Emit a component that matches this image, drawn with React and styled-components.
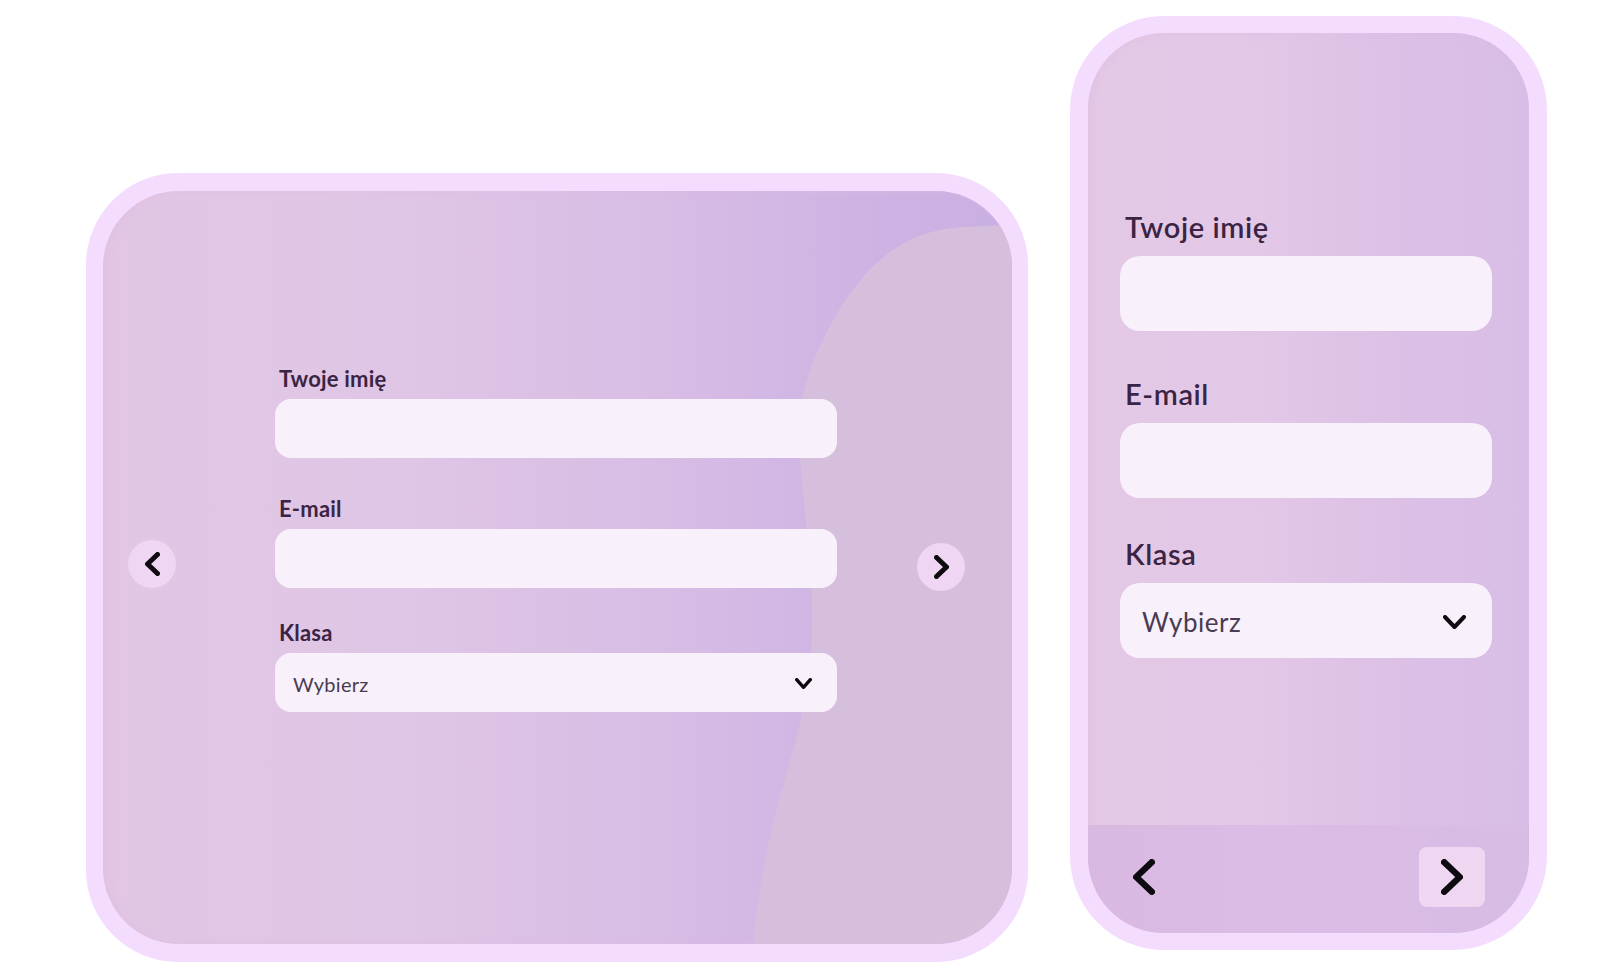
import React from "react";
import styled, { createGlobalStyle, css } from "styled-components";

const GlobalStyle = createGlobalStyle`
    html, body {
        margin: 0;
        padding: 0;
        background: #ffffff;
    }

    body {
        font-family: Lato, "Open Sans", sans-serif;
        color: #3b2443;
    }

    * {
        box-sizing: border-box;
    }
`;

// chevron whose stroke fills exactly width x height
function Chevron({ dir = "right", width, height, stroke }) {
    const s = stroke / 2;
    const w = width;
    const h = height;
    const points = {
        left: `${w - s},${s} ${s},${h / 2} ${w - s},${h - s}`,
        right: `${s},${s} ${w - s},${h / 2} ${s},${h - s}`,
        down: `${s},${s} ${w / 2},${h - s} ${w - s},${s}`,
    }[dir];
    return (
        <svg width={w} height={h} viewBox={`0 0 ${w} ${h}`} fill="none">
            <polyline
                points={points}
                stroke="#0d0a10"
                strokeWidth={stroke}
                strokeLinecap="round"
                strokeLinejoin="round"
            />
        </svg>
    );
}

function Field({ label, select, $mobile, $space }) {
    return (
        <FieldWrap $space={$space}>
            <Label $mobile={$mobile}>{label}</Label>
            {select ? (
                <SelectBox $mobile={$mobile}>
                    <span>Wybierz</span>
                    {$mobile ? (
                        <Chevron dir="down" width={23} height={14} stroke={4} />
                    ) : (
                        <Chevron dir="down" width={17} height={11} stroke={3.4} />
                    )}
                </SelectBox>
            ) : (
                <TextBox $mobile={$mobile} />
            )}
        </FieldWrap>
    );
}

export default function App() {
    return (
        <>
            <GlobalStyle />
            <Page>
                <DesktopFrame>
                    <DesktopScreen>
                        <Blob viewBox="0 0 909 753" preserveAspectRatio="none">
                            <path
                                d="M909,34 L862,36 C822,38 790,52 760,86 C730,122 705,172 698,214 C690,270 712,360 709,440 C706,520 686,570 673,620 C661,670 654,710 650,753 L909,753 Z"
                                fill="#d6bfdd"
                            />
                        </Blob>
                        <RoundNav aria-label="Wstecz">
                            <Chevron dir="left" width={15} height={24} stroke={5} />
                        </RoundNav>
                        <DesktopForm>
                            <Field label="Twoje imię" />
                            <Field label="E-mail" $space="39px" />
                            <Field label="Klasa" select $space="33px" />
                        </DesktopForm>
                        <RoundNav aria-label="Dalej" $offset="-2px">
                            <Chevron dir="right" width={15} height={24} stroke={5} />
                        </RoundNav>
                    </DesktopScreen>
                </DesktopFrame>

                <PhoneFrame>
                    <PhoneScreen>
                        <PhoneForm>
                            <Field label="Twoje imię" $mobile />
                            <Field label="E-mail" $mobile $space="46px" />
                            <Field label="Klasa" select $mobile $space="39px" />
                        </PhoneForm>
                        <PhoneFooter>
                            <SquareNav aria-label="Wstecz">
                                <Chevron dir="left" width={22} height={36} stroke={6.5} />
                            </SquareNav>
                            <SquareNav aria-label="Dalej" $filled>
                                <Chevron dir="right" width={22} height={36} stroke={6.5} />
                            </SquareNav>
                        </PhoneFooter>
                    </PhoneScreen>
                </PhoneFrame>
            </Page>
        </>
    );
}

const Page = styled.main`
    display: flex;
    flex-direction: row;
    align-items: flex-start;
    gap: 42px;

    width: 1600px;
    height: 976px;
    padding: 16px 0 0 86px;
    overflow: hidden;
`;

/* Desktop mockup */

const DesktopFrame = styled.section`
    display: flex;
    width: 942px;
    height: 789px;
    margin-top: 157px;
    padding: 18px 16px 18px 17px;

    background: #f3dcfd;
    border-radius: 92px;
`;

const DesktopScreen = styled.div`
    position: relative;
    flex: 1;
    display: flex;
    flex-direction: row;
    align-items: center;
    padding-left: 25px;

    overflow: hidden;
    border-radius: 76px;
    background: linear-gradient(
        90deg,
        #e2c6e4 0%,
        #e0c6e6 30%,
        #d8bde5 60%,
        #cdb3e3 85%,
        #c9b0e2 100%
    );
    box-shadow: inset 4px 0 6px rgba(225, 190, 225, 0.6);
`;

const Blob = styled.svg`
    position: absolute;
    inset: 0;
    width: 100%;
    height: 100%;
`;

const RoundNav = styled.button`
    position: relative;
    display: flex;
    align-items: center;
    justify-content: center;
    flex-shrink: 0;

    width: 48px;
    height: 48px;
    margin-top: ${(p) => p.$offset || "-8px"};
    padding: 0;

    border: none;
    border-radius: 50%;
    background: #efd6f2;
    cursor: pointer;
`;

const DesktopForm = styled.form`
    position: relative;
    display: flex;
    flex-direction: column;

    width: 562px;
    margin: 0 80px 56px 99px;
`;

/* Phone mockup */

const PhoneFrame = styled.section`
    display: flex;
    width: 477px;
    height: 934px;
    padding: 17px 18px;

    background: #f3dcfd;
    border-radius: 94px;
`;

const PhoneScreen = styled.div`
    flex: 1;
    display: flex;
    flex-direction: column;

    overflow: hidden;
    border-radius: 76px;
    background: linear-gradient(
        90deg,
        #e4c9e6 0%,
        #e2c7e7 40%,
        #dcc0e6 70%,
        #d8bde6 100%
    );
    box-shadow: inset 4px 0 6px rgba(225, 190, 225, 0.6);
`;

const PhoneForm = styled.form`
    flex: 1;
    display: flex;
    flex-direction: column;
    padding: 177px 37px 0 32px;
`;

const PhoneFooter = styled.div`
    display: flex;
    align-items: center;
    justify-content: space-between;

    height: 108px;
    padding: 0 44px 5px 23px;

    background: linear-gradient(90deg, #d9b8e2 0%, #dcbbe5 45%, #d7bce4 100%);
`;

const SquareNav = styled.button`
    display: flex;
    align-items: center;
    justify-content: center;

    width: 66px;
    height: 60px;
    padding: 0;

    border: none;
    border-radius: 8px;
    background: ${(p) => (p.$filled ? "#efd6f1" : "transparent")};
    cursor: pointer;
`;

/* Form parts */

const FieldWrap = styled.div`
    display: flex;
    flex-direction: column;
    margin-top: ${(p) => p.$space || "0"};
`;

const Label = styled.label`
    padding-left: 4px;
    margin-bottom: 8px;

    font-family: Lato, "Open Sans", sans-serif;
    font-weight: 700;
    font-size: 22px;
    line-height: 24px;
    letter-spacing: 0.2px;
    color: #3b2443;

    ${(p) =>
        p.$mobile &&
        css`
            padding-left: 5px;
            margin-bottom: 12px;
            font-weight: 600;
            font-size: 29px;
            line-height: 34px;
            letter-spacing: 0.6px;
        `}
`;

const boxBase = css`
    width: 100%;
    height: 59px;
    border-radius: 16px;
    background: #f8f1fb;

    ${(p) =>
        p.$mobile &&
        css`
            height: 75px;
            border-radius: 20px;
        `}
`;

const TextBox = styled.div`
    ${boxBase}
`;

const SelectBox = styled.div`
    ${boxBase}
    display: flex;
    align-items: center;
    justify-content: space-between;
    padding: 2px 25px 0 18px;

    font-family: Lato, "Open Sans", sans-serif;
    font-size: 20px;
    letter-spacing: 0.3px;
    color: #4a3b52;

    ${(p) =>
        p.$mobile &&
        css`
            padding: 2px 26px 0 22px;
            font-size: 26px;
            letter-spacing: 0.5px;
        `}
`;
